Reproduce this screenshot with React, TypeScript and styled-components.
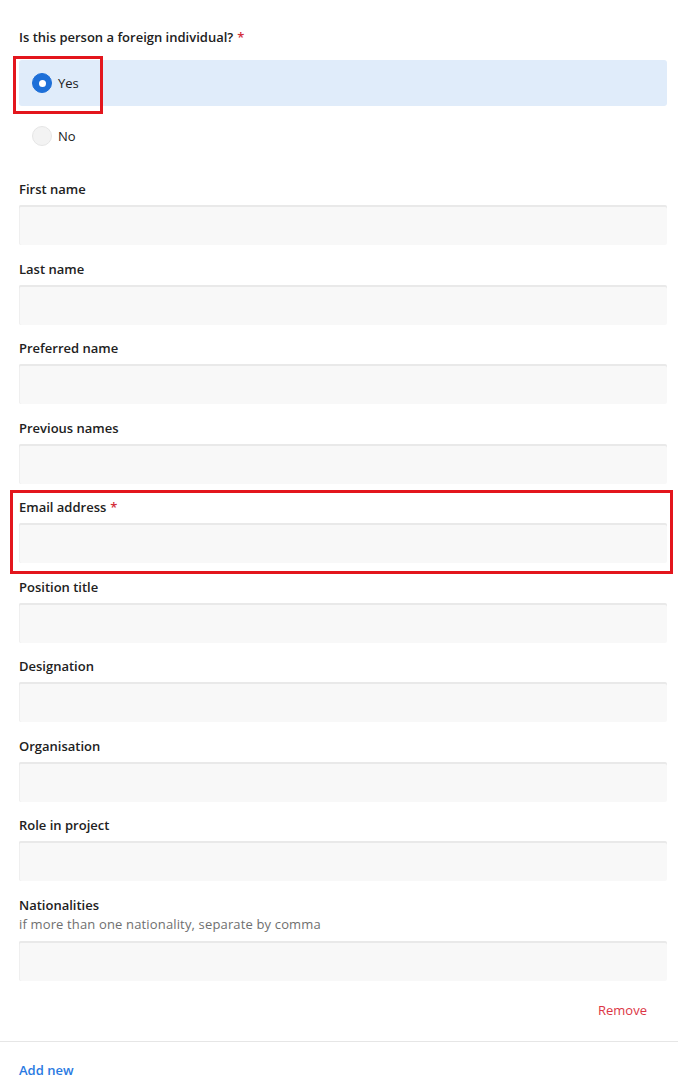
import React from "react";
import styled, { createGlobalStyle } from "styled-components";

const GlobalStyle = createGlobalStyle`
  body {
    margin: 0;
    background: #ffffff;
    font-family: "Open Sans", "Noto Sans", sans-serif;
    color: #212121;
  }
`;

const Page = styled.div`
  width: 678px;
  padding-top: 28px;
`;

const FormBody = styled.div`
  padding: 0 11px 0 19px;
`;

const Question = styled.div`
  font-size: 13px;
  font-weight: 600;
  line-height: 18px;
  margin-bottom: 14px;
`;

const Required = styled.span`
  color: #d32f3a;
  margin-left: 4px;
`;

const Options = styled.div`
  display: flex;
  flex-direction: column;
  gap: 7px;
`;

const Option = styled.div<{ $checked?: boolean }>`
  position: relative;
  display: flex;
  align-items: center;
  gap: 6px;
  height: 46px;
  padding-left: 13px;
  border-radius: 3px;
  background: ${(p) => (p.$checked ? "#e0ecfa" : "transparent")};
  font-size: 13px;
`;

const Radio = styled.span<{ $checked?: boolean }>`
  box-sizing: border-box;
  width: 20px;
  height: 20px;
  border-radius: 50%;
  display: inline-flex;
  align-items: center;
  justify-content: center;
  background: ${(p) => (p.$checked ? "#1d6fd8" : "#f3f3f3")};
  border: 1px solid ${(p) => (p.$checked ? "#1d6fd8" : "#e6e6e6")};

  &::after {
    content: "";
    display: ${(p) => (p.$checked ? "block" : "none")};
    width: 7px;
    height: 7px;
    border-radius: 50%;
    background: #ffffff;
  }
`;

const Highlight = styled.span<{ $top: number; $left: number; $right?: number; $bottom: number; $width?: number }>`
  position: absolute;
  box-sizing: border-box;
  top: ${(p) => p.$top}px;
  left: ${(p) => p.$left}px;
  ${(p) => (p.$width ? `width: ${p.$width}px;` : `right: ${p.$right}px;`)}
  bottom: ${(p) => p.$bottom}px;
  border: 3px solid #e3161d;
  pointer-events: none;
`;

const Fields = styled.div`
  margin-top: 21px;
`;

const Field = styled.div`
  position: relative;
  margin-bottom: 14.5px;
`;

const Label = styled.div`
  font-size: 13px;
  font-weight: 600;
  line-height: 18px;
  margin-bottom: 7px;
`;

const Hint = styled.div`
  font-size: 13px;
  line-height: 19px;
  letter-spacing: 0.15px;
  color: #6f6f6f;
  margin-top: -6px;
  margin-bottom: 7px;
`;

const Input = styled.input`
  display: block;
  box-sizing: border-box;
  width: 100%;
  height: 40px;
  border: none;
  border-radius: 2px;
  background: #f8f8f8;
  box-shadow: inset 0 2px 0 #e9e9e9, inset 1px 0 0 #efefef;
  outline: none;
  font-family: inherit;
  font-size: 13px;
  padding: 0 10px;
`;

const RemoveRow = styled.div`
  display: flex;
  justify-content: flex-end;
  padding: 6px 20px 0 0;
  height: 40px;
`;

const RemoveLink = styled.a`
  font-size: 13px;
  font-weight: 500;
  line-height: 18px;
  color: #dc3545;
  cursor: pointer;
`;

const Divider = styled.hr`
  margin: 0;
  border: none;
  border-top: 1px solid #e6e6e6;
`;

const Footer = styled.div`
  padding: 16px 19px 0;
`;

const AddLink = styled.a`
  font-size: 13px;
  font-weight: 600;
  line-height: 18px;
  color: #2a7ae2;
  cursor: pointer;
`;

const fields: { label: string; required?: boolean; hint?: string; marked?: boolean }[] = [
  { label: "First name" },
  { label: "Last name" },
  { label: "Preferred name" },
  { label: "Previous names" },
  { label: "Email address", required: true, marked: true },
  { label: "Position title" },
  { label: "Designation" },
  { label: "Organisation" },
  { label: "Role in project" },
  { label: "Nationalities", hint: "if more than one nationality, separate by comma" },
];

export default function App() {
  return (
    <Page>
      <GlobalStyle />
      <FormBody>
        <Question>
          Is this person a foreign individual?<Required>*</Required>
        </Question>
        <Options>
          <Option $checked>
            <Radio $checked />
            Yes
            <Highlight $top={-4} $left={-6} $width={90} $bottom={-8} />
          </Option>
          <Option>
            <Radio />
            No
          </Option>
        </Options>
        <Fields>
          {fields.map((f) => (
            <Field key={f.label}>
              <Label>
                {f.label}
                {f.required && <Required>*</Required>}
              </Label>
              {f.hint && <Hint>{f.hint}</Hint>}
              <Input type="text" />
              {f.marked && <Highlight $top={-8} $left={-9} $right={-6} $bottom={-11} />}
            </Field>
          ))}
        </Fields>
        <RemoveRow>
          <RemoveLink>Remove</RemoveLink>
        </RemoveRow>
      </FormBody>
      <Divider />
      <Footer>
        <AddLink>Add new</AddLink>
      </Footer>
    </Page>
  );
}
